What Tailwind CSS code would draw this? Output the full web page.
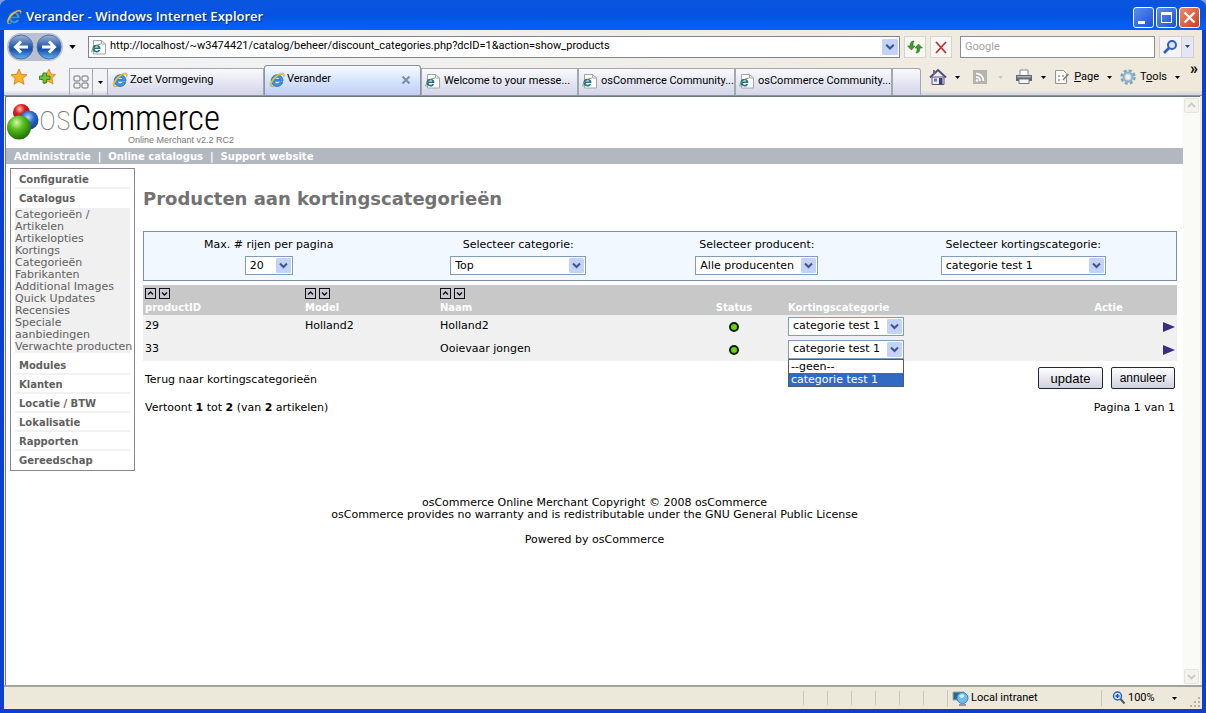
<!DOCTYPE html>
<html lang="nl">
<head>
<meta charset="utf-8">
<title>Verander - Windows Internet Explorer</title>
<script src="https://cdn.jsdelivr.net/npm/@tailwindcss/browser@4"></script>
</head>
<body class="bg-[#7d9be0]">
<svg class="absolute size-0" aria-hidden="true">
  <defs>
    <linearGradient id="gBlue" x1="0" y1="0" x2="0" y2="1"><stop offset="0" stop-color="#a3b3d0"/><stop offset=".45" stop-color="#2c63b8"/><stop offset=".6" stop-color="#1a4fae"/><stop offset="1" stop-color="#5fb4f5"/></linearGradient>
    <radialGradient id="gGreen" cx=".4" cy=".3" r=".7"><stop offset="0" stop-color="#d8f7a8"/><stop offset=".4" stop-color="#5bc21f"/><stop offset="1" stop-color="#1f6d08"/></radialGradient>
    <radialGradient id="gRed" cx=".4" cy=".3" r=".7"><stop offset="0" stop-color="#ffc0b8"/><stop offset=".4" stop-color="#dc1f1f"/><stop offset="1" stop-color="#8a0d0d"/></radialGradient>
    <radialGradient id="gSph" cx=".45" cy=".35" r=".7"><stop offset="0" stop-color="#bcd8ff"/><stop offset=".45" stop-color="#2c68cf"/><stop offset="1" stop-color="#123a86"/></radialGradient>
  </defs>
  <symbol id="ie" viewBox="0 0 16 16">
    <path d="M14 9.200H5.400c.1 1.700 1.300 2.700 2.800 2.700 1.100 0 2-.5 2.500-1.400h3c-.8 2.400-3 4-5.600 4-3.300 0-5.900-2.500-5.900-5.800s2.600-5.900 5.900-5.900c3.600 0 6 2.600 5.900 6.400zM5.500 7.300h5.300C10.600 6 9.600 5.200 8.200 5.200S5.700 6 5.500 7.300z" fill="#3a97e8" stroke="#15539f" stroke-width=".6"/>
    <path d="M2.300 14.800C-.5 13 2 7.500 6.500 4c3.600-2.900 7.600-4 8.600-2.300.6 1 .2 2.300-.6 3.600.3-1.400.1-2.300-.8-2.600-1.700-.5-5 1.200-7.700 4-2.900 3-4.400 6.200-3.200 7.300.7.600 1.900.3 3.200-.4-1.400 1.200-2.800 1.700-3.700 1.200z" fill="#efc53c" stroke="#a98a1d" stroke-width=".3"/>
  </symbol>
  <symbol id="iepage" viewBox="0 0 16 16">
    <path d="M2.500 1.500h8l4 3.500v10h-12z" fill="#fff" stroke="#a0a4ac"/><path d="M10.500 1.500V5h4" fill="none" stroke="#a0a4ac"/>
    <path d="M9.500 10H3.600c.1 1.100.9 1.800 1.900 1.800.8 0 1.300-.3 1.700-.9h2c-.6 1.700-2 2.600-3.800 2.600-2.300 0-4-1.600-4-3.900s1.700-3.900 4-3.900c2.500 0 4.200 1.700 4.100 4.300zM3.700 8.600h3.600c-.2-.8-.8-1.400-1.800-1.400s-1.700.6-1.800 1.400z" fill="#256f8e"/>
    <path d="M1 13.500C0 11 5 5.500 9.800 5" fill="none" stroke="#6a9a3c" stroke-width="1"/>
  </symbol>
  <symbol id="tri" viewBox="0 0 5 3"><path d="M0 0h5L2.500 3z"/></symbol>
  <symbol id="drop" viewBox="0 0 15 15">
    <rect width="15" height="15" rx="1.500" fill="#c3d2f8"/><path d="M4 5.500l3.500 3.500L11 5.500" fill="none" stroke="#3f5488" stroke-width="2"/>
  </symbol>
  <symbol id="up" viewBox="0 0 11 11"><rect x=".5" y=".5" width="10" height="10" fill="#c9c8d3" stroke="#111"/><path d="M3 6.500L5.500 4 8 6.500" fill="none" stroke="#111" stroke-width="1.400"/></symbol>
  <symbol id="down" viewBox="0 0 11 11"><rect x=".5" y=".5" width="10" height="10" fill="#c9c8d3" stroke="#111"/><path d="M3 4.500L5.500 7 8 4.500" fill="none" stroke="#111" stroke-width="1.400"/></symbol>
</svg>

<div class="flex min-h-screen flex-col overflow-hidden rounded-t-lg bg-[#0a3fd0] font-['Roboto',sans-serif] text-[11px] text-black">

  <!-- Title bar -->
  <header class="flex h-[30px] items-center gap-1 bg-linear-to-b from-[#0a55dd] via-[#0553e2] to-[#0462fb] pr-1.5 pl-1.5 pt-1">
    <svg class="size-4"><use href="#ie"/></svg>
    <h1 class="flex-1 font-['Open_Sans',sans-serif] text-[13px] font-semibold text-white [text-shadow:1px_1px_1px_#0a2a80]">Verander - Windows Internet Explorer</h1>
    <div class="flex gap-[2px]">
      <button aria-label="Minimaliseren" class="size-[21px] rounded-[3px] border border-white bg-linear-to-br from-[#5d8df2] to-[#1c50d2]"><svg viewBox="0 0 19 19"><path d="M4 13h7v3H4z" fill="#fff"/></svg></button>
      <button aria-label="Maximaliseren" class="size-[21px] rounded-[3px] border border-white bg-linear-to-br from-[#5d8df2] to-[#1c50d2]"><svg viewBox="0 0 19 19"><path d="M4 4h11v11H4zM5 7v7h9V7z" fill="#fff" fill-rule="evenodd"/></svg></button>
      <button aria-label="Sluiten" class="size-[21px] rounded-[3px] border border-white bg-linear-to-br from-[#ee8a68] to-[#cf3a16]"><svg viewBox="0 0 19 19"><path d="M4.500 4.500l10 10M14.500 4.500l-10 10" stroke="#fff" stroke-width="2.400"/></svg></button>
    </div>
  </header>

  <div class="mx-1 mb-1 flex flex-1 flex-col bg-linear-to-r from-[#f3f4f6] via-[#f0eeea] to-[#efe9da]">

    <!-- Address bar -->
    <div class="flex h-[33px] items-center pr-2 pl-[3px]">
      <div class="flex h-7 items-center rounded-full bg-[#b9c1d0] px-px">
        <button aria-label="Vorige" class="size-[26px]"><svg viewBox="0 0 26 26"><circle cx="13" cy="13" r="12" fill="url(#gBlue)" stroke="#5570a0"/><path d="M20 13H8M13 7.500L7.500 13l5.500 5.500" fill="none" stroke="#fff" stroke-width="3"/></svg></button>
        <button aria-label="Volgende" class="ml-0.5 size-[26px]"><svg viewBox="0 0 26 26"><circle cx="13" cy="13" r="12" fill="url(#gBlue)" stroke="#5570a0"/><path d="M6 13h12M13 7.500l5.500 5.500-5.500 5.500" fill="none" stroke="#fff" stroke-width="3"/></svg></button>
      </div>
      <button aria-label="Recente pagina's" class="ml-1 p-0.5"><svg class="h-1 w-[7px]"><use href="#tri"/></svg></button>
      <label class="ml-2.5 flex h-[22px] flex-1 items-center border border-[#7f8590] bg-white pl-0.5">
        <svg class="mr-[3px] size-4"><use href="#iepage"/></svg>
        <input aria-label="Adres" type="text" class="min-w-0 flex-1 outline-none" value="http://localhost/~w3474421/catalog/beheer/discount_categories.php?dcID=1&amp;action=show_products">
        <svg class="mr-px size-4"><use href="#drop"/></svg>
      </label>
      <button aria-label="Vernieuwen" class="ml-1 size-[22px] border border-[#d5d3cb] bg-[#f8f7f3]"><svg viewBox="0 0 20 20"><path d="M9 4C6 4 5 6 5 9H2.500L6.500 13l3.500-4H8c0-2 0-3 1-5zM11 16c3 0 4-2 4-5h2.500l-4-4L10 11h2c0 2 0 3-1 5z" fill="#3b9c28" stroke="#246a16" stroke-width=".5"/></svg></button>
      <button aria-label="Stoppen" class="ml-1 size-[22px] border border-[#d5d3cb] bg-[#f8f7f3]"><svg viewBox="0 0 20 20"><path d="M5 5l10 11M15 5L5 16" stroke="#c2303a" stroke-width="1.800"/></svg></button>
      <input aria-label="Zoeken" type="text" placeholder="Google" class="ml-2 h-[22px] w-[195px] border border-[#8b8f96] bg-white px-1 outline-none placeholder:text-[#a3a3a3]">
      <div class="ml-1 flex h-[22px] border border-[#cfcfd4] bg-[#f4f4f6]">
        <button aria-label="Zoek" class="w-[21px]"><svg viewBox="0 0 21 20"><circle cx="12" cy="8" r="4" fill="#dbe9fb" stroke="#2d5fc4" stroke-width="2"/><path d="M9 11l-5 5" stroke="#2d5fc4" stroke-width="2.600"/></svg></button>
        <button aria-label="Zoekopties" class="flex w-3 items-center justify-center border-l border-[#cfcfd4] bg-[#e4e6f6]"><svg class="h-[3px] w-[5px] fill-[#30407c]"><use href="#tri"/></svg></button>
      </div>
    </div>

    <!-- Tabs and command bar -->
    <div class="flex h-[33px] items-end border-b border-[#8e939c] bg-linear-to-b from-transparent from-85% to-[#cfd3e6]">
      <div class="flex h-full items-center gap-2.5 pr-[13px] pb-1 pl-1.5">
        <button aria-label="Favorieten"><svg class="size-[18px]" viewBox="0 0 18 18"><path d="M9 1l2.300 5.300 5.700.5-4.300 3.800 1.300 5.700L9 13.300 4 16.300l1.300-5.700L1 6.800l5.700-.5z" fill="#fbb32c" stroke="#c97a12" stroke-width=".8"/></svg></button>
        <button aria-label="Aan favorieten toevoegen"><svg class="size-[18px]" viewBox="0 0 18 18"><path d="M11 1l2 5 4.500.5L14 10.500l1 5.500-5-3-4 3 1-5-3-4 4.500-.5z" fill="#fbb32c" stroke="#c97a12" stroke-width=".7"/><path d="M5 5h3.500v3H12v3.500H8.500V15H5v-3.500H1.500V8H5z" fill="#6cc43c" stroke="#25760f" stroke-width=".8"/></svg></button>
      </div>
      <nav aria-label="Tabbladen" class="flex min-w-0 flex-1 items-end whitespace-nowrap">
        <button aria-label="Snelle tabbladen" class="flex h-[27px] w-6 items-center justify-center border border-b-0 border-[#a3a7b0]"><svg class="size-4" viewBox="0 0 16 16" fill="none" stroke="#6d717c"><rect x="1" y="2" width="6" height="5" rx="1"/><rect x="9" y="2" width="6" height="5" rx="1"/><rect x="1" y="9" width="6" height="5" rx="1"/><rect x="9" y="9" width="6" height="5" rx="1"/></svg></button>
        <button aria-label="Tabbladlijst" class="flex h-[27px] w-3.5 items-center justify-center border-t border-[#a3a7b0]"><svg class="h-[3px] w-[5px]"><use href="#tri"/></svg></button>
        <button class="flex h-[27px] w-[157px] items-center gap-0.5 border border-b-0 border-[#a3a7b0] bg-linear-to-b from-[#fafafc] to-[#d3d5ea] px-1 pb-1"><svg class="size-4 shrink-0"><use href="#ie"/></svg><span>Zoet Vormgeving</span></button>
        <button aria-current="page" class="flex h-[30px] w-[157px] items-center gap-0.5 rounded-t-[3px] border border-b-0 border-[#8e93a2] bg-linear-to-b from-[#f7fafe] via-[#d5e5fb] to-[#c3cdf6] px-1 pb-0.5"><svg class="size-4 shrink-0"><use href="#ie"/></svg><span class="flex-1 text-left">Verander</span><svg class="mr-1 size-3" viewBox="0 0 12 12"><path d="M2.500 2.500l7 7M9.500 2.500l-7 7" stroke="#7e8cab" stroke-width="2"/></svg></button>
        <button class="flex h-[27px] w-[157px] items-center gap-[3px] border border-b-0 border-[#a3a7b0] bg-linear-to-b from-[#fafafc] to-[#d3d5ea] pb-0.5 pl-[3px]"><svg class="size-4 shrink-0"><use href="#iepage"/></svg><span>Welcome to your messe...</span></button>
        <button class="flex h-[27px] w-[157px] items-center gap-[3px] border border-b-0 border-[#a3a7b0] bg-linear-to-b from-[#fafafc] to-[#d3d5ea] pb-0.5 pl-[3px]"><svg class="size-4 shrink-0"><use href="#iepage"/></svg><span>osCommerce Community...</span></button>
        <button class="flex h-[27px] w-[157px] items-center gap-[3px] border border-b-0 border-[#a3a7b0] bg-linear-to-b from-[#fafafc] to-[#d3d5ea] pb-0.5 pl-[3px]"><svg class="size-4 shrink-0"><use href="#iepage"/></svg><span>osCommerce Community...</span></button>
        <button aria-label="Nieuw tabblad" class="h-[27px] w-[29px] rounded-tr-[3px] border border-b-0 border-[#a3a7b0] bg-linear-to-b from-[#fafafc] to-[#d3d5ea]"></button>
      </nav>
      <div class="flex h-full items-center pr-1 pb-1">
        <button class="flex items-center gap-2" aria-label="Startpagina"><svg class="size-[18px]" viewBox="0 0 18 18"><path d="M3 9h12v7.500H3z" fill="#ece8f4" stroke="#5c5480"/><path d="M1 9.500L9 2l8 7.500" fill="none" stroke="#544b80" stroke-width="2"/><path d="M4 2h2v4H4z" fill="#6c6a90"/><path d="M10 10h3.500v6.500H10z" fill="#3d3b80"/><path d="M5 10.500h3v3H5z" fill="#5a7fc0"/></svg><svg class="h-[3px] w-[5px]"><use href="#tri"/></svg></button>
        <button class="ml-3 flex items-center gap-2.5" aria-label="Feeds"><svg class="size-4" viewBox="0 0 16 16"><rect x="1" y="1" width="14" height="14" fill="#b4b4ae"/><path d="M4 4.500c4.500 0 7.500 3 7.500 7.500M4 8c2.500 0 4 1.500 4 4" fill="none" stroke="#fff" stroke-width="1.600"/><circle cx="5" cy="11.500" r="1.200" fill="#fff"/></svg><svg class="h-[3px] w-[5px] fill-[#ccc8bc]"><use href="#tri"/></svg></button>
        <button class="ml-3 flex items-center gap-2" aria-label="Afdrukken"><svg class="h-4 w-[18px]" viewBox="0 0 18 16"><path d="M5 1h8v6H5z" fill="#fff" stroke="#888"/><path d="M1 6h16v6H1z" fill="#60656e"/><path d="M2 7h14v1.500H2z" fill="#aeb2b9"/><path d="M4 10h10v4.500H4z" fill="#f4f4f4" stroke="#777"/></svg><svg class="h-[3px] w-[5px]"><use href="#tri"/></svg></button>
        <button class="ml-2 flex items-center gap-1"><svg class="size-4" viewBox="0 0 16 16"><path d="M1.500 1.500h8l3 3v10h-11z" fill="#fdfdfb" stroke="#95958e"/><path d="M4 6h2v2H4zM8 6h2v2H8zM4 10h2v2H4z" fill="#a6acb8"/><path d="M14.500 5L9 11" stroke="#777" stroke-width="1.400"/></svg><span><u>P</u>age</span><svg class="ml-1 h-[3px] w-[5px]"><use href="#tri"/></svg></button>
        <button class="ml-2 flex items-center gap-1"><svg class="size-4" viewBox="0 0 16 16"><circle cx="8" cy="8" r="6.500" fill="none" stroke="#7fa4bd" stroke-width="2.500" stroke-dasharray="3 2.100"/><circle cx="8" cy="8" r="4.500" fill="#cde0ea" stroke="#8eb0c5" stroke-width="2"/><circle cx="8" cy="8" r="2" fill="#f5f2ea"/></svg><span>T<u>o</u>ols</span><svg class="ml-1 h-[3px] w-[5px]"><use href="#tri"/></svg></button>
        <button class="ml-2.5 self-start text-base leading-3 font-bold">»</button>
      </div>
    </div>

    <!-- Viewport -->
    <div class="mr-0.5 ml-px flex flex-1 border-t border-l border-[#6f7580] bg-white font-['DejaVu_Sans',sans-serif]">
      <main class="min-w-0 flex-1">
        <div class="flex h-[51px] items-start pt-1.5 pl-px">
          <svg class="h-10 w-8 shrink-0" viewBox="0 0 32 40"><circle cx="14.500" cy="9.500" r="8.500" fill="url(#gRed)"/><circle cx="22" cy="17" r="9.500" fill="url(#gSph)"/><circle cx="12" cy="24.500" r="12" fill="url(#gGreen)"/></svg>
          <div>
            <div class="font-['Roboto_Condensed','Roboto',sans-serif] text-[35px] leading-8 font-light text-black"><span class="font-thin text-[#777]">os</span>Commerce</div>
            <p class="pl-[89px] font-['Liberation_Sans',sans-serif] text-[9px] leading-[11px] whitespace-nowrap text-[#777]">Online Merchant v2.2 RC2</p>
          </div>
        </div>
        <nav class="flex h-4 items-center gap-[7px] bg-[#b3b8c0] pl-2 text-[10px] font-bold text-white">
          <a href="#">Administratie</a><span>|</span><a href="#">Online catalogus</a><span>|</span><a href="#">Support website</a>
        </nav>

        <div class="flex items-start gap-2 pt-1 pr-1.5 pl-1">
          <!-- Side menu -->
          <aside class="w-[125px] shrink-0 border border-[#8c858f] px-1 pt-px text-[#616060]">
            <h2 class="flex h-[19px] items-center border-b-2 border-[#f1f1f1] pt-0.5 pl-1 text-[10px] font-bold"><a href="#">Configuratie</a></h2>
            <h2 class="flex h-[19px] items-center pl-1 text-[10px] font-bold"><a href="#">Catalogus</a></h2>
            <ul class="mb-[3px] bg-[#f0f0f0] pt-px text-[11px] leading-3 whitespace-nowrap">
              <li><a href="#">Categorieën /<br>Artikelen</a></li>
              <li><a href="#">Artikelopties</a></li>
              <li><a href="#">Kortings<br>Categorieën</a></li>
              <li><a href="#">Fabrikanten</a></li>
              <li><a href="#">Additional Images</a></li>
              <li><a href="#">Quick Updates</a></li>
              <li><a href="#">Recensies</a></li>
              <li><a href="#">Speciale<br>aanbiedingen</a></li>
              <li><a href="#">Verwachte producten</a></li>
            </ul>
            <h2 class="flex h-[19px] items-center border-b-2 border-[#f1f1f1] pt-0.5 pl-1 text-[10px] font-bold"><a href="#">Modules</a></h2>
            <h2 class="flex h-[19px] items-center border-b-2 border-[#f1f1f1] pt-0.5 pl-1 text-[10px] font-bold"><a href="#">Klanten</a></h2>
            <h2 class="flex h-[19px] items-center border-b-2 border-[#f1f1f1] pt-0.5 pl-1 text-[10px] font-bold"><a href="#">Locatie / BTW</a></h2>
            <h2 class="flex h-[19px] items-center border-b-2 border-[#f1f1f1] pt-0.5 pl-1 text-[10px] font-bold"><a href="#">Lokalisatie</a></h2>
            <h2 class="flex h-[19px] items-center border-b-2 border-[#f1f1f1] pt-0.5 pl-1 text-[10px] font-bold"><a href="#">Rapporten</a></h2>
            <h2 class="flex h-[19px] items-center pl-1 text-[10px] font-bold"><a href="#">Gereedschap</a></h2>
          </aside>

          <section class="min-w-0 flex-1">
            <h1 class="pt-[18px] pb-5 text-[18px] leading-[25px] font-bold text-[#727272]">Producten aan kortingscategorieën</h1>
            <form class="grid h-[50px] grid-cols-[250fr_250fr_228fr_306fr] items-center border border-[#7b8ea8] bg-[#f2f8ff] leading-4">
              <div class="flex flex-col items-center gap-[3px]">
                <label for="rows">Max. # rijen per pagina</label>
                <span class="relative"><select id="rows" class="block h-[19px] w-12 appearance-none border border-[#7f9db9] bg-white pl-1"><option>20</option></select><svg class="pointer-events-none absolute top-0.5 right-0.5 size-[15px]"><use href="#drop"/></svg></span>
              </div>
              <div class="flex flex-col items-center gap-[3px]">
                <label for="cat">Selecteer categorie:</label>
                <span class="relative"><select id="cat" class="block h-[19px] w-[136px] appearance-none border border-[#7f9db9] bg-white pl-1"><option>Top</option></select><svg class="pointer-events-none absolute top-0.5 right-0.5 size-[15px]"><use href="#drop"/></svg></span>
              </div>
              <div class="flex flex-col items-center gap-[3px]">
                <label for="prod">Selecteer producent:</label>
                <span class="relative"><select id="prod" class="block h-[19px] w-[123px] appearance-none border border-[#7f9db9] bg-white pl-1"><option>Alle producenten</option></select><svg class="pointer-events-none absolute top-0.5 right-0.5 size-[15px]"><use href="#drop"/></svg></span>
              </div>
              <div class="flex flex-col items-center gap-[3px]">
                <label for="kort">Selecteer kortingscategorie:</label>
                <span class="relative"><select id="kort" class="block h-[19px] w-[165px] appearance-none border border-[#7f9db9] bg-white pl-1"><option>categorie test 1</option></select><svg class="pointer-events-none absolute top-0.5 right-0.5 size-[15px]"><use href="#drop"/></svg></span>
              </div>
            </form>

            <table class="mt-1 w-full table-fixed border-collapse">
              <colgroup><col class="w-40"><col class="w-[135px]"><col><col class="w-[104px]"><col class="w-[254px]"><col class="w-[137px]"></colgroup>
              <thead>
                <tr class="h-[30px] bg-[#c8c8c8] text-left align-bottom text-[10px] text-white">
                  <th class="px-0.5"><span class="flex h-[13px] gap-[3px]"><button type="button" class="size-[11px]" aria-label="Oplopend"><svg class="size-[11px]"><use href="#up"/></svg></button><button type="button" class="size-[11px]" aria-label="Aflopend"><svg class="size-[11px]"><use href="#down"/></svg></button></span><span class="block leading-[14px]">productID</span></th>
                  <th class="px-0.5"><span class="flex h-[13px] gap-[3px]"><button type="button" class="size-[11px]" aria-label="Oplopend"><svg class="size-[11px]"><use href="#up"/></svg></button><button type="button" class="size-[11px]" aria-label="Aflopend"><svg class="size-[11px]"><use href="#down"/></svg></button></span><span class="block leading-[14px]">Model</span></th>
                  <th class="px-0.5"><span class="flex h-[13px] gap-[3px]"><button type="button" class="size-[11px]" aria-label="Oplopend"><svg class="size-[11px]"><use href="#up"/></svg></button><button type="button" class="size-[11px]" aria-label="Aflopend"><svg class="size-[11px]"><use href="#down"/></svg></button></span><span class="block leading-[14px]">Naam</span></th>
                  <th class="px-0.5 text-center leading-[14px]">Status</th>
                  <th class="px-0.5 leading-[14px]">Kortingscategorie</th>
                  <th class="px-0.5 text-center leading-[14px]">Actie</th>
                </tr>
              </thead>
              <tbody class="bg-[#f0f0f0]">
                <tr class="h-[23px]">
                  <td class="px-0.5">29</td><td class="px-0.5">Holland2</td><td class="px-0.5">Holland2</td>
                  <td><svg class="mx-auto size-2.5" viewBox="0 0 10 10"><circle cx="5" cy="5" r="4" fill="#6fd010" stroke="#0c2206" stroke-width="2"/></svg></td>
                  <td class="px-0.5"><span class="relative block w-[116px]"><select aria-label="Kortingscategorie Holland2" class="block h-[19px] w-full appearance-none border border-[#7f9db9] bg-white pl-1"><option>categorie test 1</option></select><svg class="pointer-events-none absolute top-0.5 right-0.5 size-[15px]"><use href="#drop"/></svg></span></td>
                  <td class="px-0.5"><a href="#" aria-label="Holland2 bewerken"><svg class="ml-auto h-2.5 w-3" viewBox="0 0 12 10"><path d="M0 0l12 5-12 5z" fill="#3c2c84"/></svg></a></td>
                </tr>
                <tr class="h-[23px]">
                  <td class="px-0.5">33</td><td class="px-0.5"></td><td class="px-0.5">Ooievaar jongen</td>
                  <td><svg class="mx-auto size-2.5" viewBox="0 0 10 10"><circle cx="5" cy="5" r="4" fill="#6fd010" stroke="#0c2206" stroke-width="2"/></svg></td>
                  <td class="px-0.5"><div class="relative w-[116px]"><select aria-label="Kortingscategorie Ooievaar jongen" class="block h-[19px] w-full appearance-none border border-[#7f9db9] bg-white pl-1"><option>categorie test 1</option></select><svg class="pointer-events-none absolute top-0.5 right-0.5 size-[15px]"><use href="#drop"/></svg>
                    <ul role="listbox" aria-label="Kortingscategorie" class="absolute top-full left-0 w-full border border-[#555a68] bg-white leading-[13px]"><li role="option" class="pl-0.5">--geen--</li><li role="option" aria-selected="true" class="bg-[#316ac5] pl-0.5 text-white">categorie test 1</li></ul></div></td>
                  <td class="px-0.5"><a href="#" aria-label="Ooievaar jongen bewerken"><svg class="ml-auto h-2.5 w-3" viewBox="0 0 12 10"><path d="M0 0l12 5-12 5z" fill="#3c2c84"/></svg></a></td>
                </tr>
              </tbody>
            </table>

            <div class="flex items-center justify-between px-0.5 pt-1.5">
              <a href="#" class="pt-1">Terug naar kortingscategorieën</a>
              <div class="flex gap-2 font-['Liberation_Sans',sans-serif] text-[13px]">
                <button type="submit" class="h-[22px] w-[65px] rounded-[2px] border border-[#22263c] bg-linear-to-b from-white to-[#cfd1df] leading-none">update</button>
                <button type="button" class="h-[22px] w-16 rounded-[2px] border border-[#22263c] bg-linear-to-b from-white to-[#cfd1df] text-xs leading-none">annuleer</button>
              </div>
            </div>
            <div class="flex justify-between px-0.5 pt-[13px] leading-3">
              <p>Vertoont <b>1</b> tot <b>2</b> (van <b>2</b> artikelen)</p>
              <p>Pagina 1 van 1</p>
            </div>
          </section>
        </div>

        <footer class="pt-[26px] text-center leading-3">
          <p>osCommerce Online Merchant Copyright © 2008 osCommerce<br>osCommerce provides no warranty and is redistributable under the GNU General Public License</p>
          <p class="pt-[13px]">Powered by osCommerce</p>
        </footer>
      </main>
      <div aria-hidden="true" class="flex w-[17px] shrink-0 flex-col justify-between bg-[#fafaf7]">
        <svg class="h-[17px]" viewBox="0 0 17 17"><rect x="1.500" y="1.500" width="14" height="14" rx="1" fill="#f4f3ee" stroke="#e4e3dc"/><path d="M5 10l3.500-3.500L12 10" fill="none" stroke="#cfcec6" stroke-width="2"/></svg>
        <svg class="h-[17px]" viewBox="0 0 17 17"><rect x="1.500" y="1.500" width="14" height="14" rx="1" fill="#f4f3ee" stroke="#e4e3dc"/><path d="M5 7l3.500 3.500L12 7" fill="none" stroke="#cfcec6" stroke-width="2"/></svg>
      </div>
    </div>

    <!-- Status bar -->
    <footer class="flex h-6 items-center justify-end border-t-2 border-[#a6a49a] bg-[#ece8da]">
      <div class="flex h-3.5" aria-hidden="true">
        <i class="w-6 border-l border-[#cbc7b5]"></i><i class="w-6 border-l border-[#cbc7b5]"></i><i class="w-6 border-l border-[#cbc7b5]"></i><i class="w-6 border-l border-[#cbc7b5]"></i><i class="w-6 border-l border-[#cbc7b5]"></i><i class="w-6 border-l border-[#cbc7b5]"></i>
      </div>
      <div class="flex w-[154px] items-center gap-0.5 border-l border-[#cbc7b5] pl-1">
        <svg class="size-[17px]" viewBox="0 0 17 17"><path d="M1 2h11v8H1z" fill="#2e6a84" stroke="#9ab"/><circle cx="10.500" cy="8" r="5.500" fill="#6fbdf0" stroke="#3b83bb"/><path d="M7 6c2-2 4-2 5-1s-1 3-3 3z" fill="#d2f0ff"/><path d="M7 15h7" stroke="#8a9aa8" stroke-width="2"/></svg>
        <span>Local intranet</span>
      </div>
      <button class="flex w-20 items-center gap-0.5 border-l border-[#cbc7b5] pr-1 pl-2.5"><svg class="size-3.5" viewBox="0 0 14 14"><circle cx="5.500" cy="5" r="4" fill="#cfe4fb" stroke="#2f66b8" stroke-width="1.500"/><path d="M5.500 3v4M3.500 5h4" stroke="#1e4fa0" stroke-width="1.300"/><path d="M8.500 8l4 4.500" stroke="#555" stroke-width="2"/></svg><span>100%</span><svg class="ml-auto h-[3px] w-[5px]"><use href="#tri"/></svg></button>
      <svg class="mt-2 mr-px ml-2 size-3" viewBox="0 0 12 12" fill="#b5b1a0"><path d="M9 1h2v2H9zM9 5h2v2H9zM9 9h2v2H9zM5 5h2v2H5zM5 9h2v2H5zM1 9h2v2H1z"/></svg>
    </footer>
  </div>
</div>
</body>
</html>
